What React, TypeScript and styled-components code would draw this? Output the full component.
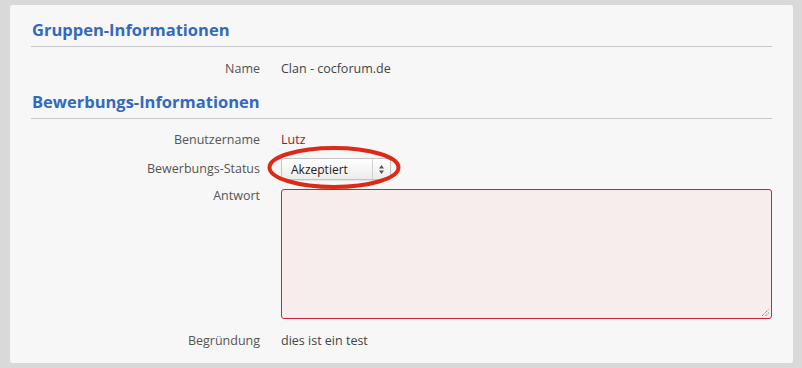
import React from "react";
import styled, { createGlobalStyle } from "styled-components";

const Global = createGlobalStyle`
  html, body { margin: 0; padding: 0; background: #d9d9d9; }
  body { font-family: "Open Sans", "DejaVu Sans", sans-serif; }
`;

const Page = styled.div`
  padding: 5px 9px 5px 10px;
  height: 368px;
  box-sizing: border-box;
`;

const Panel = styled.div`
  background: #f7f7f7;
  border-radius: 3px;
  height: 358px;
  box-sizing: border-box;
  padding: 13px 21px 0 21px;
`;

const Heading = styled.h2<{ $top?: number }>`
  margin: ${(p) => p.$top || 0}px 0 0 0;
  font-size: 16.5px;
  font-weight: 700;
  color: #3369be;
  line-height: 24px;
  padding-left: 1px;
  padding-bottom: 4px;
  border-bottom: 1px solid #c9c9c9;
`;

const Row = styled.div<{ $top: number; $align?: string }>`
  display: grid;
  grid-template-columns: 229px 1fr;
  column-gap: 21px;
  align-items: ${(p) => p.$align || "center"};
  margin-top: ${(p) => p.$top}px;
  font-size: 12.5px;
`;

const Label = styled.div<{ $lh?: number }>`
  text-align: right;
  color: #555;
  line-height: ${(p) => p.$lh || 18}px;
`;

const Value = styled.div<{ $red?: boolean }>`
  color: ${(p) => (p.$red ? "#b0101e" : "#444")};
  line-height: 18px;
`;

const SelectWrap = styled.div`
  position: relative;
  width: 110px;
  height: 22px;
`;

const Select = styled.div`
  box-sizing: border-box;
  width: 110px;
  height: 22px;
  border: 1px solid #c4c4c4;
  border-radius: 3px;
  background: linear-gradient(#ffffff, #ececec);
  display: flex;
  align-items: center;
  font-size: 12px;
  color: #222;
  box-shadow: 0 1px 1px rgba(0,0,0,0.08);
`;

const SelectText = styled.span`
  flex: 1;
  padding-left: 9px;
`;

const Arrows = styled.span`
  width: 17px;
  height: 100%;
  border-left: 1px solid #d0d0d0;
  display: flex;
  align-items: center;
  justify-content: center;
`;

const Ellipse = styled.svg`
  position: absolute;
  left: -15px;
  top: -13px;
  pointer-events: none;
`;

const Textarea = styled.div`
  box-sizing: border-box;
  height: 130px;
  border: 1px solid #c8243e;
  border-radius: 3px;
  background: #f8eded;
  position: relative;
`;

const Grip = styled.svg`
  position: absolute;
  right: 1px;
  bottom: 1px;
`;

export default function App() {
  return (
    <>
      <Global />
      <Page>
        <Panel>
          <Heading>Gruppen-Informationen</Heading>
          <Row $top={13}>
            <Label>Name</Label>
            <Value>Clan - cocforum.de</Value>
          </Row>
          <Heading $top={12}>Bewerbungs-Informationen</Heading>
          <Row $top={12}>
            <Label>Benutzername</Label>
            <Value $red>Lutz</Value>
          </Row>
          <Row $top={9}>
            <Label>Bewerbungs-Status</Label>
            <SelectWrap>
              <Select>
                <SelectText>Akzeptiert</SelectText>
                <Arrows>
                  <svg width="7" height="11" viewBox="0 0 7 11">
                    <path d="M3.5 1 L6 4.5 H1 Z" fill="#555" />
                    <path d="M3.5 10 L6 6.5 H1 Z" fill="#555" />
                  </svg>
                </Arrows>
              </Select>
              <Ellipse width="136" height="46" viewBox="0 0 136 46">
                <ellipse cx="68" cy="22.5" rx="64.5" ry="19.5" fill="none" stroke="#dc2a17" strokeWidth="4" />
              </Ellipse>
            </SelectWrap>
          </Row>
          <Row $top={9} $align="start">
            <Label $lh={14}>Antwort</Label>
            <Textarea>
              <Grip width="9" height="9" viewBox="0 0 9 9">
                <path d="M1 8 L8 1 M4.5 8 L8 4.5" stroke="#666" strokeWidth="1" strokeDasharray="1 1" />
              </Grip>
            </Textarea>
          </Row>
          <Row $top={13}>
            <Label>Begründung</Label>
            <Value>dies ist ein test</Value>
          </Row>
        </Panel>
      </Page>
    </>
  );
}
